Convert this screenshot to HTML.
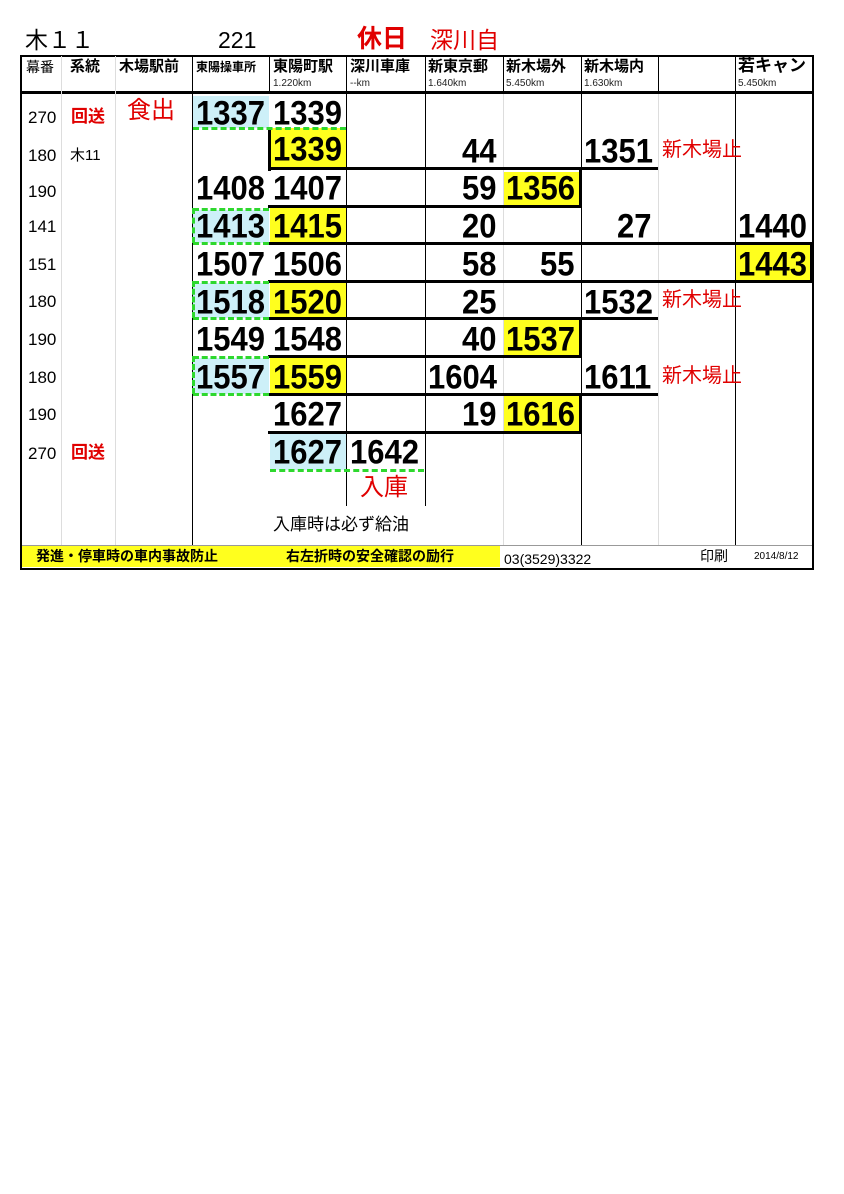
<!DOCTYPE html>
<html><head><meta charset="utf-8"><style>
body{margin:0;width:844px;height:1194px;background:#fff;position:relative;font-family:"Liberation Sans","Noto Sans CJK JP",sans-serif;overflow:hidden}
.a{position:absolute}
.t{position:absolute;white-space:nowrap;line-height:1}
.n{font-weight:bold;font-size:31px;transform:scaleY(1.12);transform-origin:0 50%}
.r{color:#e00000}
.h{font-weight:bold;font-size:15px}
.k{font-size:10px;color:#222}
.vl{position:absolute;width:1px;background:#000}
.fl{position:absolute;width:1px;background:#ddd}
.hb{position:absolute;height:3px;background:#000}
.vb{position:absolute;width:3px;background:#000}
.y{position:absolute;background:#ffff1e}
.b{position:absolute;background:#cdf0f8}
.dh{position:absolute;height:0;border-top:3px dashed #2ed82e}
.dv{position:absolute;width:0;border-left:3px dashed #2ed82e}
</style></head><body>
<div class="t" style="left:25px;top:29px;font-size:23px">木１１</div>
<div class="t" style="left:218px;top:29px;font-size:23px">221</div>
<div class="t r" style="left:357px;top:27px;font-size:25px;font-weight:bold">休日</div>
<div class="t r" style="left:430px;top:29px;font-size:23px">深川自</div>

<!-- backgrounds -->
<div class="b" style="left:193px;top:96px;width:76px;height:32px"></div>
<div class="b" style="left:193px;top:210px;width:76px;height:33px"></div>
<div class="b" style="left:193px;top:283px;width:76px;height:35px"></div>
<div class="b" style="left:193px;top:358px;width:76px;height:36px"></div>
<div class="b" style="left:270px;top:434px;width:76px;height:36px"></div>
<div class="y" style="left:270px;top:128px;width:76px;height:40px"></div>
<div class="y" style="left:503px;top:172px;width:78px;height:34px"></div>
<div class="y" style="left:270px;top:208px;width:76px;height:35px"></div>
<div class="y" style="left:735px;top:245px;width:77px;height:36px"></div>
<div class="y" style="left:270px;top:283px;width:76px;height:35px"></div>
<div class="y" style="left:503px;top:320px;width:78px;height:36px"></div>
<div class="y" style="left:270px;top:358px;width:76px;height:36px"></div>
<div class="y" style="left:503px;top:396px;width:78px;height:36px"></div>
<div class="y" style="left:22px;top:546px;width:478px;height:21px"></div>

<!-- frame -->
<div class="a" style="left:20px;top:55px;width:790px;height:511px;border:2px solid #000"></div>
<div class="hb" style="left:20px;top:91px;width:792px"></div>
<div class="a" style="left:22px;top:545px;width:790px;height:1px;background:#999"></div>
<!-- header verticals -->
<div class="vl" style="left:269px;top:56px;height:36px"></div>
<div class="vl" style="left:503px;top:56px;height:36px"></div>
<div class="vl" style="left:658px;top:56px;height:36px"></div>
<div class="fl" style="left:61px;top:56px;height:489px"></div>
<div class="fl" style="left:115px;top:56px;height:489px"></div>
<div class="vl" style="left:192px;top:56px;height:489px"></div>
<div class="vl" style="left:346px;top:56px;height:450px"></div>
<div class="vl" style="left:425px;top:56px;height:450px"></div>
<div class="vl" style="left:581px;top:56px;height:489px"></div>
<div class="vl" style="left:735px;top:56px;height:489px"></div>
<div class="fl" style="left:503px;top:94px;height:451px"></div>
<div class="fl" style="left:658px;top:94px;height:451px"></div>

<!-- header text -->
<div class="t" style="left:26px;top:60px;font-size:14px">幕番</div>
<div class="t h" style="left:70px;top:59px">系統</div>
<div class="t h" style="left:119px;top:59px">木場駅前</div>
<div class="t h" style="left:196px;top:61px;font-size:12px">東陽操車所</div>
<div class="t h" style="left:273px;top:59px">東陽町駅</div>
<div class="t k" style="left:273px;top:79px">1.220km</div>
<div class="t h" style="left:350px;top:59px">深川車庫</div>
<div class="t k" style="left:350px;top:79px">--km</div>
<div class="t h" style="left:428px;top:59px">新東京郵</div>
<div class="t k" style="left:428px;top:79px">1.640km</div>
<div class="t h" style="left:506px;top:59px">新木場外</div>
<div class="t k" style="left:506px;top:79px">5.450km</div>
<div class="t h" style="left:584px;top:59px">新木場内</div>
<div class="t k" style="left:584px;top:79px">1.630km</div>
<div class="t h" style="left:738px;top:57px;font-size:17px">若キャン</div>
<div class="t k" style="left:738px;top:79px">5.450km</div>

<!-- thick lines -->
<div class="vb" style="left:268px;top:127px;height:44px"></div>
<div class="hb" style="left:268px;top:167px;width:390px"></div>
<div class="vb" style="left:579px;top:169px;height:38px"></div>
<div class="hb" style="left:268px;top:205px;width:314px"></div>
<div class="hb" style="left:268px;top:242px;width:544px"></div>
<div class="vb" style="left:810px;top:242px;height:40px"></div>
<div class="hb" style="left:268px;top:280px;width:544px"></div>
<div class="hb" style="left:268px;top:317px;width:390px"></div>
<div class="vb" style="left:579px;top:317px;height:40px"></div>
<div class="hb" style="left:268px;top:355px;width:314px"></div>
<div class="hb" style="left:268px;top:393px;width:390px"></div>
<div class="vb" style="left:579px;top:393px;height:40px"></div>
<div class="hb" style="left:268px;top:431px;width:314px"></div>

<!-- dashed -->
<div class="dh" style="left:193px;top:127px;width:153px"></div>
<div class="dh" style="left:193px;top:208px;width:76px"></div>
<div class="dh" style="left:193px;top:242px;width:76px"></div>
<div class="dv" style="left:192px;top:208px;height:35px"></div>
<div class="dh" style="left:193px;top:281px;width:76px"></div>
<div class="dh" style="left:193px;top:317px;width:76px"></div>
<div class="dv" style="left:192px;top:281px;height:37px"></div>
<div class="dh" style="left:193px;top:356px;width:76px"></div>
<div class="dh" style="left:193px;top:393px;width:76px"></div>
<div class="dv" style="left:192px;top:356px;height:38px"></div>
<div class="dh" style="left:270px;top:469px;width:154px"></div>

<!-- left column -->
<div class="t" style="left:28px;top:109px;font-size:17px">270</div>
<div class="t r h" style="left:71px;top:108px;font-size:17px">回送</div>
<div class="t r" style="left:127px;top:99px;font-size:24px">食出</div>
<div class="t" style="left:28px;top:147px;font-size:17px">180</div>
<div class="t" style="left:70px;top:148px;font-size:15px">木11</div>
<div class="t" style="left:28px;top:183px;font-size:17px">190</div>
<div class="t" style="left:28px;top:218px;font-size:17px">141</div>
<div class="t" style="left:28px;top:256px;font-size:17px">151</div>
<div class="t" style="left:28px;top:293px;font-size:17px">180</div>
<div class="t" style="left:28px;top:331px;font-size:17px">190</div>
<div class="t" style="left:28px;top:369px;font-size:17px">180</div>
<div class="t" style="left:28px;top:406px;font-size:17px">190</div>
<div class="t" style="left:28px;top:445px;font-size:17px">270</div>
<div class="t r h" style="left:71px;top:444px;font-size:17px">回送</div>

<!-- numbers -->
<div class="t n" style="left:196px;top:97px">1337</div>
<div class="t n" style="left:273px;top:97px">1339</div>
<div class="t n" style="left:273px;top:133px">1339</div>
<div class="t n" style="left:462px;top:135px">44</div>
<div class="t n" style="left:584px;top:135px">1351</div>
<div class="t r" style="left:662px;top:140px;font-size:20px">新木場止</div>
<div class="t n" style="left:196px;top:172px">1408</div>
<div class="t n" style="left:273px;top:172px">1407</div>
<div class="t n" style="left:462px;top:172px">59</div>
<div class="t n" style="left:506px;top:172px">1356</div>
<div class="t n" style="left:196px;top:210px">1413</div>
<div class="t n" style="left:273px;top:210px">1415</div>
<div class="t n" style="left:462px;top:210px">20</div>
<div class="t n" style="left:617px;top:210px">27</div>
<div class="t n" style="left:738px;top:210px">1440</div>
<div class="t n" style="left:196px;top:248px">1507</div>
<div class="t n" style="left:273px;top:248px">1506</div>
<div class="t n" style="left:462px;top:248px">58</div>
<div class="t n" style="left:540px;top:248px">55</div>
<div class="t n" style="left:738px;top:248px">1443</div>
<div class="t n" style="left:196px;top:286px">1518</div>
<div class="t n" style="left:273px;top:286px">1520</div>
<div class="t n" style="left:462px;top:286px">25</div>
<div class="t n" style="left:584px;top:286px">1532</div>
<div class="t r" style="left:662px;top:290px;font-size:20px">新木場止</div>
<div class="t n" style="left:196px;top:323px">1549</div>
<div class="t n" style="left:273px;top:323px">1548</div>
<div class="t n" style="left:462px;top:323px">40</div>
<div class="t n" style="left:506px;top:323px">1537</div>
<div class="t n" style="left:196px;top:361px">1557</div>
<div class="t n" style="left:273px;top:361px">1559</div>
<div class="t n" style="left:428px;top:361px">1604</div>
<div class="t n" style="left:584px;top:361px">1611</div>
<div class="t r" style="left:662px;top:366px;font-size:20px">新木場止</div>
<div class="t n" style="left:273px;top:398px">1627</div>
<div class="t n" style="left:462px;top:398px">19</div>
<div class="t n" style="left:506px;top:398px">1616</div>
<div class="t n" style="left:273px;top:436px">1627</div>
<div class="t n" style="left:350px;top:436px">1642</div>
<div class="t r" style="left:360px;top:476px;font-size:24px">入庫</div>
<div class="t" style="left:273px;top:516px;font-size:17px">入庫時は必ず給油</div>

<!-- footer -->
<div class="t h" style="left:36px;top:549px;font-size:14px">発進・停車時の車内事故防止</div>
<div class="t h" style="left:286px;top:549px;font-size:14px">右左折時の安全確認の励行</div>
<div class="t" style="left:504px;top:552px;font-size:14px">03(3529)3322</div>
<div class="t" style="left:700px;top:549px;font-size:14px">印刷</div>
<div class="t" style="left:754px;top:552px;font-size:10px">2014/8/12</div>
</body></html>
